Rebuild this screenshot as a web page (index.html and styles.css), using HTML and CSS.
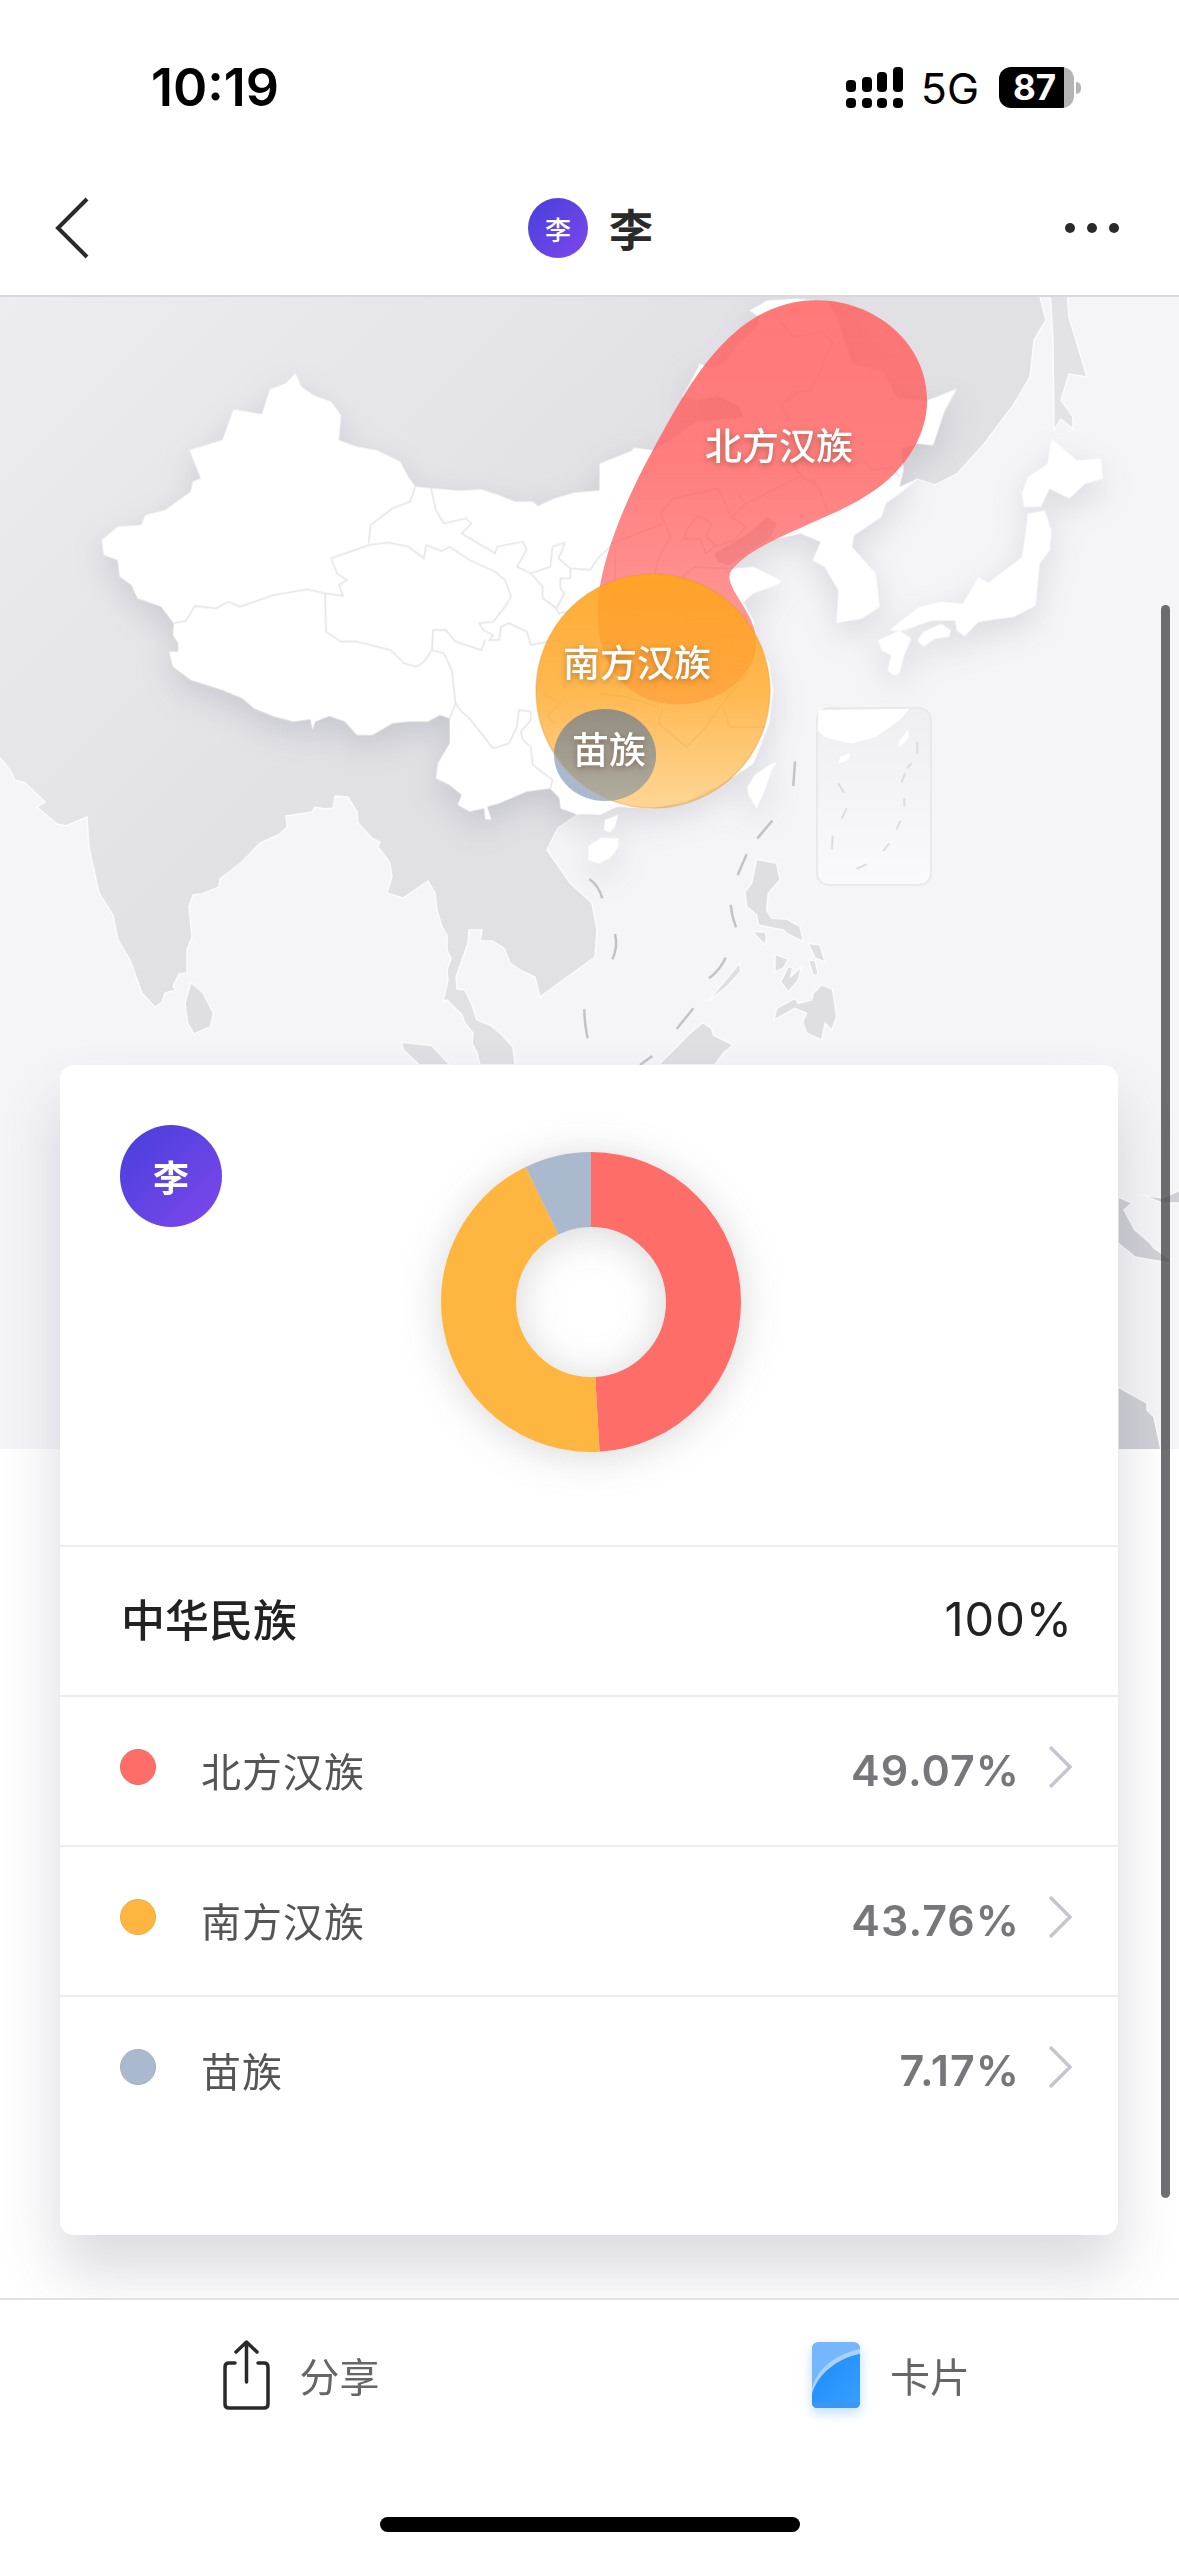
FILE: index.html
```html
<!DOCTYPE html>
<html lang="zh">
<head>
    <meta charset="utf-8">
    <title>李</title>
    <link rel="stylesheet" href="styles.css">
</head>
<body>
<div class="page">

    <div class="statusBar">
        <span class="time">10:19</span>
        <div class="statusRight">
            <svg class="signal" width="57" height="41" viewBox="0 0 57 41">
                <rect x="0" y="13" width="10" height="12" rx="4"/>
                <rect x="16" y="10" width="10" height="15" rx="4"/>
                <rect x="31" y="5" width="10" height="20" rx="4"/>
                <rect x="47" y="0" width="10" height="25" rx="4"/>
                <rect x="0" y="31" width="10" height="10" rx="4"/>
                <rect x="16" y="31" width="10" height="10" rx="4"/>
                <rect x="31" y="31" width="10" height="10" rx="4"/>
                <rect x="47" y="31" width="10" height="10" rx="4"/>
            </svg>
            <span class="network">5G</span>
            <div class="battery">
                <div class="batteryBody"><span class="batteryLevel">87</span></div>
                <div class="batteryNib"></div>
            </div>
        </div>
    </div>

    <div class="navBar">
        <svg class="backIcon" width="34" height="62" viewBox="0 0 34 62">
            <path d="M32 2 L3 31 L32 60"/>
        </svg>
        <div class="navTitle">
            <span class="avatar avatarSmall">李</span>
            <span class="titleText">李</span>
        </div>
        <div class="moreDots"><i></i><i></i><i></i></div>
    </div>

    <div class="content">
        <svg class="map" viewBox="0 297 1179 1152" width="1179" height="1152">
            <defs>
                <linearGradient id="landGrad" gradientUnits="userSpaceOnUse" x1="0" y1="297" x2="420" y2="720">
                    <stop offset="0" stop-color="#ededf1"/>
                    <stop offset="1" stop-color="#e0e0e5"/>
                </linearGradient>
                <linearGradient id="insetGrad" x1="0" y1="0" x2="0" y2="1">
                    <stop offset="0" stop-color="#efeff2"/>
                    <stop offset="1" stop-color="#fafafc"/>
                </linearGradient>
                <linearGradient id="redGrad" x1="0" y1="0" x2="0" y2="1">
                    <stop offset="0" stop-color="#ff6363" stop-opacity="0.86"/>
                    <stop offset="0.4" stop-color="#ff6363" stop-opacity="0.83"/>
                    <stop offset="1" stop-color="#ff6363" stop-opacity="0.6"/>
                </linearGradient>
                <linearGradient id="orangeGrad" x1="0" y1="0" x2="0" y2="1">
                    <stop offset="0" stop-color="#ffa41f" stop-opacity="0.92"/>
                    <stop offset="0.5" stop-color="#ffa82a" stop-opacity="0.82"/>
                    <stop offset="1" stop-color="#ffb033" stop-opacity="0.52"/>
                </linearGradient>
                <linearGradient id="grayGrad" x1="0" y1="0" x2="0" y2="1">
                    <stop offset="0" stop-color="#8f8c84" stop-opacity="0.95"/>
                    <stop offset="1" stop-color="#aeaca0" stop-opacity="0.95"/>
                </linearGradient>
                <clipPath id="orangeClip"><circle cx="653" cy="691" r="117"/></clipPath>
            </defs>

            <rect x="0" y="297" width="1179" height="1152" fill="#f5f5f8"/>

            <!-- neighbours -->
            <path class="land" fill="url(#landGrad)" d="M-5 290 L1040 290 L1040 297 L1046 320 L1034 340 L1030 377 L1014 404 L984 444 L957 474 L935 485 L917 479 L900 494 L800 500 L720 560 L700 700 L640 790 L603 813 L580 813 L558 828 L547 850 L570 883 L592 903 L597 930 L595 957 L563 980 L540 997 L535 977 L520 970 L510 963 L504 948 L492 941 L480 941 L482 930 L469 930 L468 943 L456 977 L457 989 L465 990 L472 1005 L477 1020 L490 1025 L500 1033 L513 1047 L515 1065 L480 1065 L477 1053 L472 1043 L473 1033 L465 1023 L462 1015 L447 1000 L443 1002 L448 980 L447 970 L451 958 L447 950 L447 935 L442 927 L437 910 L435 893 L428 881 L403 898 L387 893 L392 877 L390 863 L378 847 L380 842 L372 838 L358 823 L357 812 L348 797 L335 796 L333 808 L325 809 L315 807 L312 812 L286 816 L287 827 L280 834 L260 843 L242 862 L220 879 L219 887 L202 894 L193 895 L189 907 L192 937 L187 950 L187 973 L179 974 L173 986 L176 990 L165 993 L162 1002 L155 1007 L142 993 L130 960 L118 940 L113 915 L99 893 L89 848 L87 817 L66 826 L57 824 L37 807 L45 802 L25 783 L15 780 L10 770 L0 758 L-5 752 Z"/>
            <path class="land" fill="#e2e2e7" d="M1050 290 L1067 290 L1069 317 L1087 377 L1069 374 L1061 400 L1073 417 L1073 429 L1061 419 L1054 430 L1053 340 Z"/>
            <path class="land landDark" d="M1118 1197 L1132 1203 L1124 1210 L1135 1230 L1150 1243 L1154 1248 L1171 1260 L1169 1263 L1135 1257 L1118 1243 Z"/>
            <path class="land landDark" d="M1143 1195 L1162 1198 L1185 1188 L1185 1203 L1162 1203 Z"/>
            <path class="land landDark" d="M1118 1387 L1147 1403 L1147 1410 L1154 1417 L1162 1455 L1118 1455 Z"/>
            <g transform="scale(0.3333) translate(0,2190)">
                <path class="landSea" d="M573 757 L610 790 L640 850 L632 890 L582 912 L563 880 L555 820 Z"/>
                <path class="landSea" d="M1205 937 L1295 947 L1350 1005 L1258 1005 L1210 960 Z"/>
            </g>
            <g transform="translate(520,770) scale(0.3333)">
                <path class="landSea" d="M710 268 L770 280 L780 330 L745 370 L740 420 L755 445 L800 447 L840 470 L850 515 L800 490 L790 480 L715 465 L710 435 L680 410 L675 365 L695 340 Z"/>
                <path class="landSea" d="M697 485 L735 485 L740 500 L735 525 Z"/>
                <path class="landSea" d="M865 520 L900 525 L915 575 L885 565 Z"/>
                <path class="landSea" d="M865 570 L885 572 L895 612 L880 617 Z"/>
                <path class="landSea" d="M765 553 L805 567 L790 595 L765 605 Z"/>
                <path class="landSea" d="M805 590 L818 592 L812 620 L845 590 L835 630 L805 665 L782 635 Z"/>
                <path class="landSea" d="M905 645 L938 658 L950 740 L935 780 L915 760 L905 810 L860 790 L848 755 L860 730 L825 715 L790 735 L762 750 L770 715 L825 685 L835 700 L875 690 L880 670 Z"/>
                <path class="landSea" d="M660 578 L662 605 L620 650 L565 695 L600 650 Z"/>
                <path class="landSea" d="M548 758 L575 775 L580 795 L640 825 L610 850 L585 885 L415 885 L470 830 L510 790 Z"/>
            </g>

            <g class="whiteLand">
                <!-- west of china -->
                <g transform="translate(80,350) scale(0.3954,0.3333)">
                    <path class="china" d="M545 70 L560 110 L590 135 L635 155 L660 195 L655 270 L700 290 L750 300 L810 335 L830 380 L848 410 L890 415 L960 422 L1015 418 L1060 435 L1100 455 L1145 455 L1158 468 L1200 445 L1250 428 L1310 422 L1350 410 L1395 365 L1382 330 L1400 293 L1445 300 L1568 300 L1568 1300 L1330 1380 L1260 1395 L1215 1375 L1212 1340 L1190 1315 L1130 1325 L1060 1360 L1030 1370 L1040 1410 L1025 1408 L1022 1375 L985 1385 L955 1365 L965 1335 L935 1305 L900 1285 L905 1240 L935 1180 L935 1105 L910 1095 L880 1115 L830 1115 L790 1120 L740 1155 L700 1155 L670 1115 L630 1098 L595 1115 L588 1140 L583 1108 L540 1115 L490 1100 L440 1075 L410 1045 L360 1020 L320 1005 L280 990 L235 950 L225 905 L248 905 L248 880 L235 855 L237 820 L205 770 L145 745 L130 705 L100 680 L95 630 L60 615 L55 570 L95 530 L155 525 L165 495 L215 480 L280 425 L285 395 L305 385 L277 300 L360 270 L388 178 L460 192 L480 118 L520 100 Z"/>
                </g>
                <!-- east of china, korea, japan -->
                <g transform="translate(560,297) scale(0.3948,0.3333)">
                    <path class="china" d="M180 462 L235 465 L290 420 L345 375 L465 360 L455 330 L400 297 L345 310 L310 300 L355 200 L380 215 L420 195 L445 150 L500 85 L505 60 L480 40 L525 10 L600 5 L680 15 L700 60 L740 200 L820 225 L855 305 L930 310 L1005 275 L975 340 L945 445 L905 440 L865 455 L870 520 L860 570 L905 545 L860 590 L825 620 L815 660 L745 715 L740 750 L800 830 L810 930 L765 965 L700 978 L705 880 L670 810 L640 790 L660 735 L610 710 L530 730 L470 770 L430 815 L490 810 L560 850 L555 860 L490 890 L465 915 L490 970 L500 1040 L530 1100 L540 1180 L530 1280 L490 1400 L440 1440 L100 1440 L100 500 Z"/>
                    <path class="china" d="M1245 425 L1310 490 L1370 485 L1375 545 L1330 560 L1290 605 L1240 575 L1218 630 L1175 630 L1170 590 L1185 540 L1235 500 Z"/>
                    <path class="china" d="M1185 650 L1228 640 L1245 700 L1240 760 L1215 800 L1205 925 L1150 960 L1060 975 L1025 1018 L1005 1000 L1000 970 L940 970 L870 1000 L835 1000 L860 975 L910 930 L965 915 L1020 920 L1060 840 L1085 858 L1170 780 L1180 700 Z"/>
                    <path class="china" d="M920 1005 L965 980 L990 1000 L985 1020 L950 1025 L920 1050 L905 1030 Z"/>
                    <path class="china" d="M805 1030 L860 1000 L890 1025 L870 1080 L860 1130 L845 1135 L830 1120 L838 1075 L815 1060 Z"/>
                </g>
                <!-- south coast and islands -->
                <g transform="translate(520,770) scale(0.3333)">
                    <path class="china" d="M100 0 L665 0 L600 45 L500 95 L390 115 L290 110 L240 135 L165 130 L125 110 L120 85 L90 55 L100 30 Z"/>
                    <path class="china" d="M205 228 L245 203 L295 205 L295 230 L270 265 L235 280 L205 270 Z"/>
                    <path class="china" d="M255 150 L295 135 L285 170 L270 187 L252 180 Z"/>
                    <path class="china" d="M755 -20 L770 -22 L755 0 L735 60 L710 115 L685 75 L682 50 L705 15 Z"/>
                </g>
            </g>

            <g transform="translate(80,350) scale(0.3954,0.3333)" class="provinces">
                <polyline points="848,410 835,455 790,475 735,525 730,580"/>
                <polyline points="237,820 268,812 290,768 345,775 375,755 405,770 490,735 575,718 620,730 665,738 655,705 675,690 650,670 635,625 730,585 780,578 830,590 870,625 875,585 915,603 935,590 985,630 1050,665 1075,690 1090,740 1075,770 1045,815 1010,820 1020,840 1045,855 1035,870 1060,870 1065,830 1085,820 1130,845 1140,885 1210,870"/>
                <polyline points="620,730 622,845 660,875 700,875 785,900 820,940 850,950 870,935 890,900 893,840 925,840 950,875 1015,900 1025,870"/>
                <polyline points="890,900 920,910 940,960 950,1060 935,1105"/>
                <polyline points="950,1060 965,1085 985,1105 1045,1195 1085,1180 1105,1130 1110,1080 1140,1085 1140,1110 1115,1145 1120,1170 1140,1190 1145,1245 1195,1290 1190,1315"/>
                <polyline points="888,415 900,480 920,520 975,505 990,520 965,550 1050,610 1055,590 1120,575 1130,600 1105,650 1140,670 1190,650 1195,590 1225,578 1220,600 1210,625 1240,655 1290,660 1310,625 1345,585"/>
                <polyline points="1140,670 1170,710 1170,745 1205,775 1225,730 1215,715 1215,685 1240,685 1240,655"/>
                <polyline points="1205,775 1210,790 1250,780"/>
                <polyline points="1170,1030 1215,1060 1180,1100 1200,1120"/>
            </g>
            <g transform="translate(560,297) scale(0.3948,0.3333)" class="provinces">
                <polyline points="540,45 590,120 660,105 690,135 660,220 635,280 600,285 560,325 580,370"/>
                <polyline points="600,520 620,545 655,570 670,620 680,650"/>
                <polyline points="470,620 605,540 650,555"/>
                <polyline points="450,590 470,620 435,660 470,690 440,730 390,750"/>
                <polyline points="260,680 130,740"/>
                <polyline points="285,605 400,575 430,650"/>
                <polyline points="285,605 255,650 280,720 250,780 240,830"/>
                <polyline points="320,700 350,655 385,680 370,720 395,745 370,770 355,725 315,725 320,700"/>
                <polyline points="770,490 790,520 840,510 860,540"/>
                <polyline points="590,500 600,520"/>
                <polyline points="140,770 140,900 130,960 250,910 300,850 340,810 430,815"/>
                <polyline points="290,930 330,970 400,960 440,1050 490,1100"/>
                <polyline points="130,960 150,1040 180,1100"/>
                <polyline points="260,1230 250,1280 320,1350 370,1290 410,1220 480,1120"/>
                <polyline points="410,1220 430,1290 520,1290"/>
                <polyline points="250,1230 170,1200 100,1190"/>
                <path class="bohai" d="M390 770 L470 715 L525 660 L550 680 L530 725 L470 770 L430 805 L400 795 Z"/>
            </g>

            <!-- south china sea inset -->
            <rect class="inset" x="817" y="708" width="114" height="177" rx="12"/>
            <g transform="translate(560,297) scale(0.3948,0.3333)">
                <path fill="#fff" d="M655 1240 L885 1235 L860 1270 L800 1320 L740 1340 L700 1330 L670 1320 L652 1300 Z"/>
                <path fill="#fff" d="M710 1380 L735 1368 L730 1390 L705 1400 Z"/>
                <path fill="#fff" d="M880 1300 L885 1320 L860 1350 L858 1335 Z"/>
            </g>
            <g class="insetDash" transform="translate(520,770) scale(0.3333)">
                <path d="M955 40 L972 68"/><path d="M980 115 L965 145"/><path d="M938 197 L936 238"/>
                <path d="M1040 283 L1010 296"/><path d="M1108 220 L1090 243"/><path d="M1142 152 L1130 178"/>
                <path d="M1153 85 L1153 110"/><path d="M1155 10 L1145 38"/>
                <path d="M1192 -85 L1192 -50"/><path d="M1175 -20 L1160 -5"/>
            </g>

            <g class="nineDash" transform="translate(520,770) scale(0.3333)">
                <path d="M825 -25 L820 48"/><path d="M757 152 L712 205"/><path d="M680 253 L653 315"/>
                <path d="M632 405 Q636 440 648 472"/><path d="M617 563 Q600 600 567 625"/><path d="M520 715 L470 777"/>
                <path d="M397 858 L360 885"/><path d="M193 718 Q193 760 203 805"/><path d="M285 492 Q295 530 277 568"/>
                <path d="M208 327 Q235 345 247 385"/>
            </g>

            <g transform="translate(560,297) scale(0.3948,0.3333)">
                <path class="blobRed" d="M650 10 C800 10 930 140 930 310 C930 430 860 540 770 600 C680 670 470 740 430 830 C420 880 500 950 497 1040 C495 1140 400 1222 300 1222 C170 1222 95 1100 95 950 C95 800 170 600 235 460 C320 280 430 10 650 10 Z"/>
            </g>

            <ellipse cx="605" cy="755" rx="51" ry="46" fill="#a9b9d0"/>
            <circle class="blobOrange" cx="653" cy="691" r="117"/>
            <ellipse cx="605" cy="755" rx="51" ry="46" fill="url(#grayGrad)" clip-path="url(#orangeClip)"/>

            <text class="mapLabel" x="779" y="460">北方汉族</text>
            <text class="mapLabel" x="637" y="677">南方汉族</text>
            <text class="mapLabel" x="609" y="764">苗族</text>
        </svg>

        <div class="card">
            <div class="cardTop">
                <span class="avatar avatarBig">李</span>
                <svg class="donut" width="300" height="300" viewBox="0 0 300 300">
                    <g transform="rotate(-90 150 150)">
                        <circle class="slice" cx="150" cy="150" r="112.5" stroke="#ff6d69" pathLength="100" stroke-dasharray="49.07 100"/>
                        <circle class="slice" cx="150" cy="150" r="112.5" stroke="#ffb640" pathLength="100" stroke-dasharray="43.76 100" stroke-dashoffset="-49.07"/>
                        <circle class="slice" cx="150" cy="150" r="112.5" stroke="#aab9ce" pathLength="100" stroke-dasharray="7.17 100" stroke-dashoffset="-92.83"/>
                    </g>
                </svg>
            </div>

            <div class="totalRow">
                <span class="totalName">中华民族</span>
                <span class="totalValue">100%</span>
            </div>

            <div class="row">
                <span class="dot dotRed"></span>
                <span class="rowName">北方汉族</span>
                <span class="rowValue">49.07%</span>
                <svg class="arrow" width="24" height="42" viewBox="0 0 24 42"><path d="M2 1 L22 21 L2 41"/></svg>
            </div>
            <div class="row">
                <span class="dot dotOrange"></span>
                <span class="rowName">南方汉族</span>
                <span class="rowValue">43.76%</span>
                <svg class="arrow" width="24" height="42" viewBox="0 0 24 42"><path d="M2 1 L22 21 L2 41"/></svg>
            </div>
            <div class="row">
                <span class="dot dotBlue"></span>
                <span class="rowName">苗族</span>
                <span class="rowValue">7.17%</span>
                <svg class="arrow" width="24" height="42" viewBox="0 0 24 42"><path d="M2 1 L22 21 L2 41"/></svg>
            </div>
        </div>
    </div>

    <div class="tabBar">
        <div class="tabs">
            <div class="tab">
                <svg class="shareIcon" width="47" height="70" viewBox="0 0 47 70">
                    <path d="M12 23 L6 23 Q2 23 2 27 L2 64 Q2 68 6 68 L41 68 Q45 68 45 64 L45 27 Q45 23 41 23 L35 23"/>
                    <path d="M23.5 42 L23.5 3 M13 12 L23.5 2 L34 12"/>
                </svg>
                <span class="tabText">分享</span>
            </div>
            <div class="tab tabCard">
                <svg class="cardIcon" width="48" height="66" viewBox="0 0 48 66">
                    <defs>
                        <linearGradient id="cardGrad" x1="0" y1="0" x2="1" y2="1">
                            <stop offset="0" stop-color="#1f88fb"/>
                            <stop offset="1" stop-color="#35a2ff"/>
                        </linearGradient>
                    </defs>
                    <rect width="48" height="66" rx="6" fill="#75b7fd"/>
                    <path d="M0 46 C6 26 24 12 48 7 L48 12 C24 17 6 32 0 52 Z" fill="#a9d3fe"/>
                    <path d="M0 52 C6 32 24 17 48 12 L48 60 C48 64 46 66 42 66 L6 66 C2 66 0 64 0 60 Z" fill="url(#cardGrad)"/>
                    <path d="M0 60 L48 60 C48 64 46 66 42 66 L6 66 C2 66 0 64 0 60 Z" fill="#3f95f2"/>
                </svg>
                <span class="tabText">卡片</span>
            </div>
        </div>
        <div class="homeBar"></div>
    </div>

    <div class="scrollThumb"></div>
</div>
</body>
</html>
```

FILE: styles.css
```css
* {
    box-sizing: border-box;
}

html, body {
    margin: 0;
    padding: 0;
    background-color: #fff;
}

body {
    font-family: "Noto Sans CJK SC", "Inter", sans-serif;
    color: #222;
}

.page {
    position: relative;
    width: 1179px;
    height: 2556px;
    overflow: hidden;
    display: flex;
    flex-direction: column;
}

/* status bar */
.statusBar {
    height: 165px;
    flex: none;
    display: flex;
    justify-content: space-between;
    padding: 67px 98px 0 151px;
}

.time {
    font-family: "Inter", sans-serif;
    font-size: 52px;
    font-weight: 600;
    line-height: 41px;
    color: #000;
    height: 41px;
}

.statusRight {
    display: flex;
    height: 41px;
    align-items: center;
}

.signal {
    fill: #000;
}

.network {
    font-family: "Inter", sans-serif;
    font-size: 43px;
    font-weight: 400;
    margin: 0 20px 0 18px;
    color: #000;
}

.battery {
    display: flex;
    align-items: center;
}

.batteryBody {
    width: 75px;
    height: 41px;
    border-radius: 12px;
    background: linear-gradient(to right, #000 87%, #b4b4b4 87%);
    padding-left: 14px;
}

.batteryLevel {
    font-family: "Inter", sans-serif;
    font-size: 35px;
    font-weight: 700;
    line-height: 41px;
    color: #fff;
    display: block;
}

.batteryNib {
    width: 5px;
    height: 12px;
    margin-left: 2px;
    background-color: #b4b4b4;
    border-radius: 0 6px 6px 0;
}

/* nav bar */
.navBar {
    position: relative;
    height: 132px;
    flex: none;
    display: flex;
    align-items: center;
    justify-content: space-between;
    padding: 0 60px 4px 55px;
    border-bottom: 2px solid #d9d9db;
}

.backIcon path {
    fill: none;
    stroke: #2a2a2a;
    stroke-width: 4;
}

.navTitle {
    display: flex;
    align-items: center;
    gap: 21px;
    margin-left: 27px;
}

.titleText {
    font-size: 44px;
    font-weight: 700;
    line-height: 60px;
    color: #2a2a2a;
}

.moreDots {
    display: flex;
    gap: 12px;
}

.moreDots i {
    width: 10px;
    height: 10px;
    border-radius: 50%;
    background-color: #2a2a2a;
}

.avatar {
    display: flex;
    align-items: center;
    justify-content: center;
    border-radius: 50%;
    color: #fff;
    background: linear-gradient(135deg, #463fdc, #7f47ea);
    flex: none;
}

.avatarSmall {
    width: 60px;
    height: 60px;
    font-size: 26px;
    font-weight: 500;
}

.avatarBig {
    width: 102px;
    height: 102px;
    font-size: 36px;
    font-weight: 700;
}

/* map and card */
.content {
    position: relative;
    flex: 1;
    overflow: hidden;
    padding-top: 768px;
}

.map {
    position: absolute;
    top: 0;
    left: 0;
    display: block;
}

.land, .landSea {
    stroke: #fbfbfd;
    stroke-width: 1.5;
    vector-effect: non-scaling-stroke;
}

.landSea {
    fill: #dedee3;
}

.landDark {
    fill: #d0d0d6;
}

.whiteLand {
    filter: drop-shadow(0 12px 16px rgba(70, 70, 95, 0.16));
}

.china {
    fill: #fff;
}

.provinces polyline {
    fill: none;
    stroke: #e5e5e9;
    stroke-width: 1.6;
    vector-effect: non-scaling-stroke;
}

.bohai {
    fill: #d8d8dd;
    stroke: none;
}

.inset {
    fill: url(#insetGrad);
    stroke: #e9e9ed;
    stroke-width: 2;
}

.insetDash path {
    fill: none;
    stroke: #dcdce1;
    stroke-width: 2;
    vector-effect: non-scaling-stroke;
}

.nineDash path {
    fill: none;
    stroke: #c2c2c9;
    stroke-width: 2.5;
    vector-effect: non-scaling-stroke;
}

.blobRed {
    fill: url(#redGrad);
}

.blobOrange {
    fill: url(#orangeGrad);
    stroke: rgba(225, 155, 50, 0.4);
    stroke-width: 1.5;
}

.mapLabel {
    font-size: 37px;
    font-weight: 500;
    fill: #fff;
    text-anchor: middle;
    filter: drop-shadow(0 2px 3px rgba(90, 50, 20, 0.45));
}

.card {
    position: relative;
    width: 1058px;
    height: 1170px;
    margin-left: 60px;
    background-color: #fff;
    border-radius: 14px;
    box-shadow: 0 36px 60px rgba(70, 70, 100, 0.2);
}

.cardTop {
    height: 480px;
    display: flex;
    align-items: flex-start;
    padding: 60px 0 0 60px;
}

.donut {
    margin: 27px 0 0 219px;
    overflow: visible;
    filter: drop-shadow(0 4px 20px rgba(60, 60, 70, 0.2));
}

.slice {
    fill: none;
    stroke-width: 75;
}

.totalRow, .row {
    height: 150px;
    display: flex;
    align-items: center;
    border-top: 2px solid #ededf0;
}

.totalRow {
    justify-content: space-between;
    padding: 0 45px 6px 61px;
}

.totalName {
    font-size: 44px;
    font-weight: 500;
    color: #222;
}

.totalValue {
    font-family: "Inter", sans-serif;
    font-size: 47px;
    font-weight: 400;
    letter-spacing: 1px;
    color: #222;
}

.row {
    padding: 0 46px 3px 60px;
}

.dot {
    width: 36px;
    height: 36px;
    border-radius: 50%;
    margin: -5px 45px 0 0;
    flex: none;
}

.dotRed {
    background-color: #ff6d69;
    border: 1px solid #ef6a66;
}

.dotOrange {
    background-color: #ffb640;
    border: 1px solid #efaa3e;
}

.dotBlue {
    background-color: #aab9ce;
    border: 1px solid #9fafc5;
}

.rowName {
    flex: 1;
    font-size: 40px;
    letter-spacing: 1px;
    color: #555;
}

.rowValue {
    font-family: "Inter", sans-serif;
    font-size: 43px;
    font-weight: 600;
    letter-spacing: 1px;
    color: #77777b;
}

.arrow {
    margin: -5px 0 0 28px;
}

.arrow path {
    fill: none;
    stroke: #c5c5d0;
    stroke-width: 3.5;
}

/* bottom bar */
.tabBar {
    position: relative;
    height: 258px;
    flex: none;
    background-color: #fff;
    border-top: 2px solid #e2e2e4;
}

.tabs {
    display: flex;
    padding: 40px 0 0 13px;
    height: 217px;
}

.tab {
    flex: 1;
    display: flex;
    justify-content: center;
    align-items: center;
    align-self: flex-start;
    gap: 30px;
    height: 70px;
}

.tabCard {
    padding-left: 14px;
}

.shareIcon path {
    fill: none;
    stroke: #2a2a2a;
    stroke-width: 3.5;
    stroke-linecap: round;
    stroke-linejoin: round;
}

.cardIcon {
    filter: drop-shadow(0 5px 6px rgba(50, 140, 250, 0.3));
}

.tabText {
    font-size: 40px;
    line-height: 50px;
    color: #666;
}

.homeBar {
    width: 420px;
    height: 15px;
    margin: 0 auto;
    background-color: #000;
    border-radius: 8px;
}

.scrollThumb {
    position: absolute;
    left: 1161px;
    top: 605px;
    width: 9px;
    height: 1593px;
    border-radius: 5px;
    background-color: rgba(55, 55, 60, 0.72);
}
```
